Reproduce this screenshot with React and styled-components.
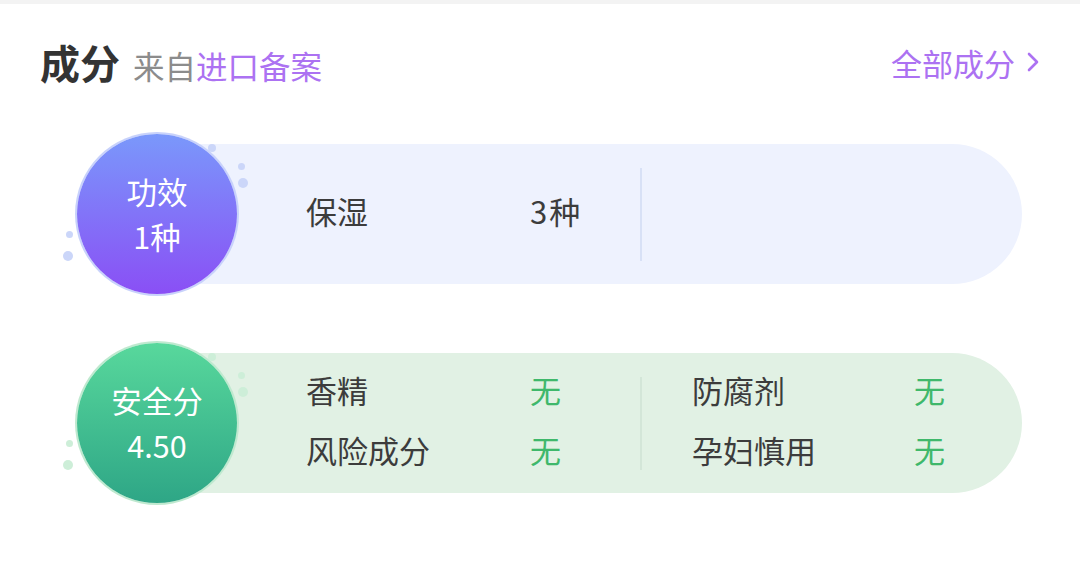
import styled, { createGlobalStyle } from "styled-components";

const GlobalStyle = createGlobalStyle`
    html, body {
        margin: 0;
        padding: 0;
        background: #ffffff;
        font-family: "Noto Sans CJK SC", "Noto Sans", sans-serif;
    }
`;

const Page = styled.div`
    width: 1080px;
    height: 563px;
    background: #fff;
    border-top: 4px solid #f3f3f3;
    box-sizing: border-box;
    overflow: hidden;
`;

const Header = styled.div`
    display: flex;
    align-items: center;
    justify-content: space-between;
    height: 60px;
    margin-top: 28px;
    padding: 0 40px;
`;

const TitleGroup = styled.div`
    display: flex;
    align-items: baseline;
`;

const Title = styled.span`
    font-size: 40px;
    font-weight: 700;
    color: #333;
    margin-right: 13px;
`;

const Sub = styled.span`
    font-size: 31.5px;
    color: ${(p) => (p.$accent ? "#ac72f2" : "#8c8c8c")};
`;

const MoreLink = styled.a`
    display: flex;
    align-items: center;
    gap: 11px;
    font-size: 31px;
    color: #ac72f2;
    text-decoration: none;
`;

const Cards = styled.div`
    display: flex;
    flex-direction: column;
    gap: 49px;
    margin-top: 42px;
    padding-left: 77px;
`;

const Row = styled.div`
    display: flex;
    align-items: center;
`;

const Badge = styled.div`
    position: relative;
    z-index: 1;
    flex: none;
    width: 160px;
    height: 160px;
    border-radius: 50%;
    background: ${(p) => p.$gradient};
    box-shadow: 0 0 0 2px ${(p) => p.$ring};
    display: flex;
    flex-direction: column;
    align-items: center;
    justify-content: center;
    color: #fff;
    font-size: 30.5px;
    line-height: 45px;
`;

const Dot = styled.span`
    position: absolute;
    left: ${(p) => p.$x - p.$r}px;
    top: ${(p) => p.$y - p.$r}px;
    width: ${(p) => p.$r * 2}px;
    height: ${(p) => p.$r * 2}px;
    border-radius: 50%;
    background: ${(p) => p.$color};
`;

const Bar = styled.div`
    margin-left: -37px;
    width: 822px;
    height: 140px;
    box-sizing: border-box;
    border-radius: 0 70px 70px 0;
    background: ${(p) => p.$bg};
    padding-left: 106px;
    padding-bottom: 7px;
    display: flex;
    align-items: center;
`;

const Column = styled.div`
    display: flex;
    flex-direction: column;
    gap: 18px;
    width: ${(p) => p.$width}px;
`;

const Item = styled.div`
    display: flex;
    align-items: center;
    height: 42px;
    font-size: 31px;
    color: #3c3c3c;
`;

const Label = styled.span`
    width: ${(p) => p.$w || 224}px;
    flex: none;
`;

const Value = styled.span`
    color: ${(p) => (p.$good ? "#3fb86b" : "#3c3c3c")};
    letter-spacing: ${(p) => (p.$spaced ? "2px" : "0")};
`;

const Divider = styled.div`
    width: 2px;
    height: 93px;
    margin-top: 7px;
    background: ${(p) => p.$color};
    margin-right: 50px;
`;

const dotSpots = [
    [135, 14, 4], [164, 32, 3.5], [166, 49, 5], [-8, 100, 3.5], [-9, 122, 5],
];

function Dots({ color }) {
    return dotSpots.map(([x, y, r], i) => <Dot key={i} $x={x} $y={y} $r={r} $color={color} />);
}

function Chevron() {
    return (
        <svg width="14" height="22" viewBox="0 0 14 22">
            <path d="M3 3 L11 11 L3 19" fill="none" stroke="#ac72f2" strokeWidth="2.6" strokeLinecap="round" strokeLinejoin="round" />
        </svg>
    );
}

export default function App() {
    return (
        <Page>
            <GlobalStyle />
            <Header>
                <TitleGroup>
                    <Title>成分</Title>
                    <Sub>来自</Sub>
                    <Sub $accent>进口备案</Sub>
                </TitleGroup>
                <MoreLink>全部成分<Chevron /></MoreLink>
            </Header>
            <Cards>
                <Row>
                    <Badge $gradient="linear-gradient(180deg, #7a98fb 0%, #8a4ff5 100%)" $ring="#c8d2fb">
                        <Dots color="#cbd6f9" />
                        <div>功效</div>
                        <div>1种</div>
                    </Badge>
                    <Bar $bg="#eef2fe">
                        <Column $width={334}>
                            <Item><Label>保湿</Label><Value $spaced>3种</Value></Item>
                        </Column>
                        <Divider $color="#d8e1f6" />
                    </Bar>
                </Row>
                <Row>
                    <Badge $gradient="linear-gradient(180deg, #58d89c 0%, #2ea686 100%)" $ring="#bfe9cf">
                        <Dots color="#cdeed8" />
                        <div>安全分</div>
                        <div>4.50</div>
                    </Badge>
                    <Bar $bg="#e1f1e4">
                        <Column $width={334}>
                            <Item><Label>香精</Label><Value $good>无</Value></Item>
                            <Item><Label>风险成分</Label><Value $good>无</Value></Item>
                        </Column>
                        <Divider $color="#d3e6d8" />
                        <Column $width={280}>
                            <Item><Label $w={222}>防腐剂</Label><Value $good>无</Value></Item>
                            <Item><Label $w={222}>孕妇慎用</Label><Value $good>无</Value></Item>
                        </Column>
                    </Bar>
                </Row>
            </Cards>
        </Page>
    );
}
